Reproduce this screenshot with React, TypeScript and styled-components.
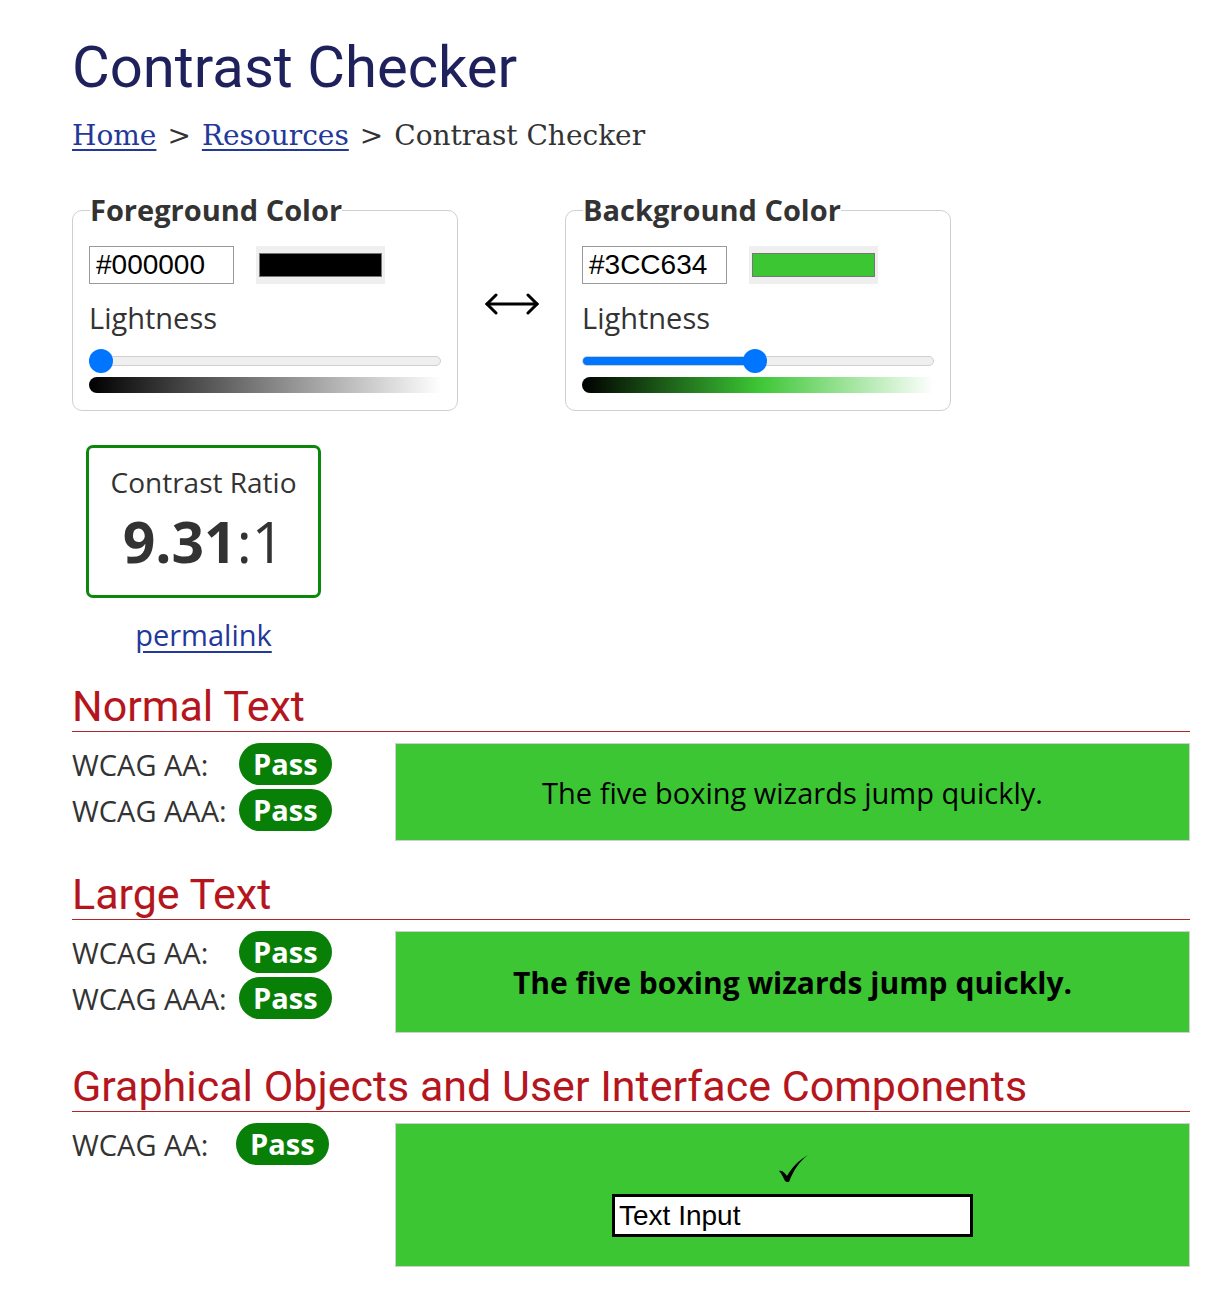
import React from 'react';
import styled, { createGlobalStyle } from 'styled-components';

const GlobalStyle = createGlobalStyle`
  body {
    margin: 0;
    background: #ffffff;
    color: #333333;
    font-family: 'Open Sans', 'Noto Sans', sans-serif;
  }
`;

const Page = styled.main`
  padding: 33px 23px 40px 72px;
  width: 1118px;
`;

const Title = styled.h1`
  font-family: Roboto, 'Noto Sans', sans-serif;
  font-weight: 400;
  font-size: 58px;
  line-height: 68px;
  color: #1e215b;
  margin: 0;
`;

const Breadcrumb = styled.nav`
  margin-top: 18px;
  height: 34px;
  font-family: 'DejaVu Serif', 'Liberation Serif', serif;
  font-size: 28px;
  line-height: 34px;
  color: #333333;

  a {
    color: #22389a;
    text-decoration: underline;
    text-underline-offset: 4px;
  }
`;

const Sep = styled.span`
  margin: 0 11px;
`;

const PickerRow = styled.div`
  display: flex;
  align-items: center;
  margin-top: 39px;
`;

const Fieldset = styled.fieldset`
  width: 352px;
  margin: 0;
  padding: 0 16px 17px;
  border: 1px solid #cfcfcf;
  border-radius: 10px;
`;

const Legend = styled.legend`
  padding: 0;
  margin-left: 1px;
  font-weight: 700;
  font-size: 29px;
  line-height: 36px;
  color: #333333;
`;

const InputRow = styled.div`
  display: flex;
  align-items: center;
  gap: 22px;
  margin-top: 18px;
`;

const HexInput = styled.div`
  box-sizing: border-box;
  width: 145px;
  height: 38px;
  padding-left: 6px;
  border: 1px solid #9a9a9a;
  font-family: 'Liberation Sans', Arial, sans-serif;
  font-size: 28px;
  line-height: 36px;
  color: #000000;
`;

const Swatch = styled.div<{ $color: string }>`
  box-sizing: border-box;
  width: 129px;
  height: 38px;
  padding: 7px 3px;
  background: #efefef;

  &::after {
    content: '';
    display: block;
    height: 100%;
    box-sizing: border-box;
    border: 1px solid #767676;
    background: ${p => p.$color};
  }
`;

const Label = styled.div`
  margin-top: 16px;
  font-size: 29px;
  line-height: 36px;
  color: #333333;
`;

const Slider = styled.div`
  position: relative;
  height: 24px;
  margin-top: 13px;
`;

const Track = styled.div`
  position: absolute;
  left: 0;
  right: 0;
  top: 7px;
  height: 10px;
  box-sizing: border-box;
  border: 1px solid #cfcfcf;
  border-radius: 5px;
  background: #efefef;
  overflow: hidden;
`;

const Fill = styled.div`
  height: 100%;
  background: #0075ff;
`;

const Thumb = styled.div`
  position: absolute;
  top: 0;
  width: 24px;
  height: 24px;
  border-radius: 50%;
  background: #0075ff;
`;

const Gradient = styled.div<{ $stops: string }>`
  margin-top: 4px;
  height: 16px;
  border-radius: 8px 0 0 8px;
  background: linear-gradient(to right, ${p => p.$stops});
`;

const SwapArrow = styled.div`
  width: 107px;
  display: flex;
  justify-content: center;
  margin-top: 4px;
`;

const RatioBox = styled.div`
  width: 229px;
  margin: 34px 0 0 14px;
  padding: 16px 0 24px;
  border: 3px solid #0b870b;
  border-radius: 7px;
  text-align: center;
`;

const RatioLabel = styled.div`
  font-size: 28px;
  line-height: 36px;
`;

const RatioValue = styled.div`
  margin-top: 11px;
  font-size: 57px;
  line-height: 60px;
  color: #333333;

  b {
    font-weight: 700;
  }
`;

const Permalink = styled.a`
  display: block;
  width: 235px;
  margin: 19px 0 0 14px;
  text-align: center;
  font-size: 29px;
  line-height: 36px;
  color: #22389a;
  text-decoration: underline;
  text-underline-offset: 5px;
`;

const Section = styled.section`
  margin-top: 28px;
`;

const Heading = styled.h2`
  margin: 0;
  height: 50px;
  border-bottom: 1px solid #b0262b;
  font-family: Roboto, 'Noto Sans', sans-serif;
  font-weight: 400;
  font-size: 43px;
  line-height: 50px;
  color: #b5161e;
`;

const SectionBody = styled.div`
  display: grid;
  grid-template-columns: 323px 1fr;
  margin-top: 11px;
`;

const Results = styled.div`
  display: flex;
  flex-direction: column;
  gap: 4px;
`;

const ResultRow = styled.div<{ $labelWidth: number }>`
  display: grid;
  grid-template-columns: ${p => p.$labelWidth}px auto;
  align-items: center;
  height: 42px;
  font-size: 29px;
  color: #333333;
`;

const Badge = styled.span`
  justify-self: start;
  padding: 0 14px;
  height: 42px;
  border-radius: 21px;
  background: #088008;
  color: #ffffff;
  font-weight: 700;
  font-size: 29px;
  line-height: 42px;
`;

const Sample = styled.div<{ $height: number; $bold?: boolean }>`
  box-sizing: border-box;
  height: ${p => p.$height}px;
  display: flex;
  flex-direction: column;
  align-items: center;
  justify-content: center;
  border: 1px solid #cfcfcf;
  background: #3cc634;
  color: #000000;
  font-size: ${p => (p.$bold ? '30px' : '29px')};
  font-weight: ${p => (p.$bold ? 700 : 400)};
`;

const Check = styled.svg`
  display: block;
`;

const DemoInput = styled.div`
  box-sizing: border-box;
  width: 361px;
  height: 43px;
  margin-top: 10px;
  padding-left: 4px;
  border: 3px solid #000000;
  background: #ffffff;
  font-family: 'Liberation Sans', Arial, sans-serif;
  font-size: 28px;
  font-weight: 400;
  line-height: 37px;
`;

type PickerProps = {
  legend: string;
  hex: string;
  lightness: number;
  stops: string;
  filled?: boolean;
};

const ColorPicker = ({ legend, hex, lightness, stops, filled }: PickerProps) => (
  <Fieldset>
    <Legend>{legend}</Legend>
    <InputRow>
      <HexInput>{hex}</HexInput>
      <Swatch $color={hex} />
    </InputRow>
    <Label>Lightness</Label>
    <Slider>
      <Track>{filled && <Fill style={{ width: `calc(${lightness * 100}% - ${lightness * 24}px + 12px)` }} />}</Track>
      <Thumb style={{ left: `calc(${lightness * 100}% - ${lightness * 24}px)` }} />
    </Slider>
    <Gradient $stops={stops} />
  </Fieldset>
);

const Result = ({ level, labelWidth = 167 }: { level: string; labelWidth?: number }) => (
  <ResultRow $labelWidth={labelWidth}>
    <span>WCAG {level}:</span>
    <Badge>Pass</Badge>
  </ResultRow>
);

const App = () => {
  const pangram = 'The five boxing wizards jump quickly.';

  return (
    <Page>
      <GlobalStyle />
      <Title>Contrast Checker</Title>
      <Breadcrumb>
        <a href="#">Home</a>
        <Sep>&gt;</Sep>
        <a href="#">Resources</a>
        <Sep>&gt;</Sep>
        Contrast Checker
      </Breadcrumb>

      <PickerRow>
        <ColorPicker legend="Foreground Color" hex="#000000" lightness={0} stops="#000000, #ffffff" />
        <SwapArrow>
          <svg width="56" height="22" viewBox="0 0 56 22" fill="none" stroke="#000" strokeWidth="3" strokeLinecap="round">
            <path d="M3 11h50" />
            <path d="M12 2 3 11l9 9" />
            <path d="M44 2l9 9-9 9" />
          </svg>
        </SwapArrow>
        <ColorPicker
          legend="Background Color"
          hex="#3CC634"
          lightness={0.49}
          stops="#000000, #3cc634 50%, #ffffff"
          filled
        />
      </PickerRow>

      <RatioBox>
        <RatioLabel>Contrast Ratio</RatioLabel>
        <RatioValue>
          <b>9.31</b>:1
        </RatioValue>
      </RatioBox>
      <Permalink href="#">permalink</Permalink>

      <Section>
        <Heading>Normal Text</Heading>
        <SectionBody>
          <Results>
            <Result level="AA" />
            <Result level="AAA" />
          </Results>
          <Sample $height={98}>{pangram}</Sample>
        </SectionBody>
      </Section>

      <Section>
        <Heading>Large Text</Heading>
        <SectionBody>
          <Results>
            <Result level="AA" />
            <Result level="AAA" />
          </Results>
          <Sample $height={102} $bold>
            {pangram}
          </Sample>
        </SectionBody>
      </Section>

      <Section>
        <Heading>Graphical Objects and User Interface Components</Heading>
        <SectionBody>
          <Results>
            <Result level="AA" labelWidth={164} />
          </Results>
          <Sample $height={144}>
            <Check width="32" height="30" viewBox="0 0 32 30">
              <path d="M2 17c3-1 5 1 8 5C15 13 22 6 31 1c-8 6-14 14-19 27-1 0-3 0-4-1-2-4-3-7-6-10z" fill="#000" />
            </Check>
            <DemoInput>Text Input</DemoInput>
          </Sample>
        </SectionBody>
      </Section>
    </Page>
  );
};

export default App;
